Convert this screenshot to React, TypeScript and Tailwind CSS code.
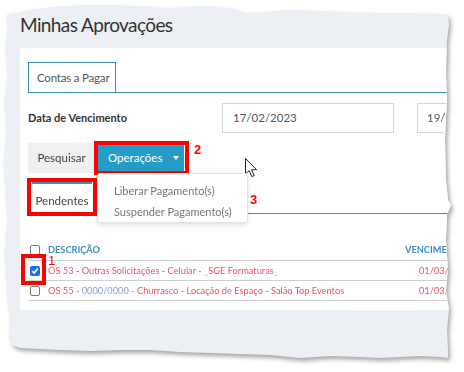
const paperClip =
  "[clip-path:polygon(3px_10px,16px_8px,31px_5px,51px_3px,76px_1px,106px_1px,136px_2px,166px_4px,196px_2px,226px_4px,241px_9px,256px_8px,286px_6px,316px_7px,346px_8px,376px_9px,406px_9px,436px_10px,444px_11px,445px_21px,443px_36px,442px_66px,443px_96px,441px_136px,442px_176px,444px_196px,447px_201px,443px_211px,442px_236px,444px_266px,442px_286px,445px_306px,443px_326px,444px_346px,444px_354px,436px_353px,416px_352px,396px_353px,376px_354px,356px_353px,326px_352px,296px_354px,266px_351px,236px_350px,206px_349px,176px_348px,146px_346px,116px_346px,86px_347px,56px_346px,36px_345px,16px_344px,8px_341px,5px_326px,7px_311px,4px_296px,3px_276px,1px_246px,4px_216px,2px_186px,0px_156px,3px_126px,1px_96px,4px_66px,2px_41px,4px_21px)]";

function Box({ checked }: { checked?: boolean }) {
  if (checked) {
    return (
      <div className="flex h-[10px] w-[10px] items-center justify-center rounded-[2px] bg-[#1a6fe8]">
        <svg width="8" height="8" viewBox="0 0 8 8">
          <path d="M1.2 4.2 L3.2 6 L6.8 1.6" fill="none" stroke="white" strokeWidth="1.6" />
        </svg>
      </div>
    );
  }
  return <div className="h-[10px] w-[10px] rounded-[2px] border border-[#7a7a7a] bg-white" />;
}

export default function App() {
  return (
    <div className="h-[372px] w-[464px] overflow-hidden bg-white font-['Lato',sans-serif]">
      <div className="pl-[4px] pt-[4px] [filter:drop-shadow(2px_3px_2px_rgba(0,0,0,0.35))]">
        <div className={`h-[362px] w-[452px] bg-[#ecf0f5] pt-[9px] ${paperClip}`}>
          <h1 className="pl-[16px] text-[19px] leading-[24px] tracking-[-0.6px] text-[#333]">Minhas Aprovações</h1>

          <div className="relative ml-[16px] mt-[11px] h-[262px] w-[440px] bg-white pt-[14px]">
            <div className="ml-[8px] flex border-b border-[#3c8dbc]">
              <div className="h-[30px] w-[88px] shrink-0 whitespace-nowrap border border-b-0 border-[#3c8dbc] pl-[8px] text-[11.5px] leading-[29px] tracking-[-0.2px] text-[#555]">
                Contas a Pagar
              </div>
            </div>

            <div className="ml-[8px] mt-[10px] flex items-center">
              <div className="w-[194px] shrink-0 whitespace-nowrap text-[11px] font-bold text-[#333]">Data de Vencimento</div>
              <div className="h-[30px] w-[172px] shrink-0 border border-[#d2d6de] pl-[10px] text-[11.5px] leading-[28px] text-[#555]">
                17/02/2023
              </div>
              <div className="ml-[23px] h-[30px] w-[60px] shrink-0 overflow-hidden whitespace-nowrap border border-[#d2d6de] pl-[9px] text-[11.5px] leading-[28px] text-[#555]">
                19/02/2023
              </div>
            </div>

            <div className="ml-[8px] mt-[10px] flex">
              <div className="flex h-[30px] w-[67px] shrink-0 items-center justify-center bg-[#f0f0f0] text-[11.5px] text-[#444]">
                Pesquisar
              </div>
              <div className="relative ml-[2px] flex h-[30px] w-[87px] shrink-0 items-center bg-[#259cc5] pl-[11px] text-[11.5px] text-white">
                Operações
                <span className="ml-[11px] h-0 w-0 border-x-[3.5px] border-t-[4px] border-x-transparent border-t-white" />
                <div className="absolute -left-[3px] -top-[2px] h-[34px] w-[95px] border-[4px] border-[#ff0000]" />
                <div className="absolute left-[97px] -top-[3px] font-['Liberation_Sans',sans-serif] text-[13px] font-bold text-[#ff0000]">
                  2
                </div>
                <div className="absolute left-0 top-[30px] z-10 h-[50px] w-[151px] rounded-[3px] border border-[#e2e2e2] bg-white pt-[6px] text-[11px] leading-[21px] text-[#777] shadow-[0_2px_4px_rgba(0,0,0,0.12)]">
                  <div className="whitespace-nowrap pl-[16px]">Liberar Pagamento(s)</div>
                  <div className="whitespace-nowrap pl-[16px]">Suspender Pagamento(s)</div>
                </div>
              </div>
            </div>

            <div className="ml-[8px] mt-[9px] flex border-b border-[#3c8dbc]">
              <div className="relative ml-[4px] h-[31px] w-[60px] shrink-0 border-t-2 border-[#3c8dbc] pt-[8px] text-center text-[11.5px] text-[#444]">
                Pendentes
                <div className="absolute -left-[5px] -top-[6px] h-[38px] w-[70px] border-[4px] border-[#ff0000]" />
              </div>
            </div>

            <div className="ml-[8px] mt-[25px] text-[9.25px]">
              <div className="flex h-[22px] items-center border-b border-[#cfcfcf] font-bold text-[#3c8dbc]">
                <div className="w-[20px] shrink-0 pl-[2px]">
                  <Box />
                </div>
                <div className="w-[357px] shrink-0">DESCRIÇÃO</div>
                <div className="whitespace-nowrap">VENCIMENTO</div>
              </div>
              <div className="flex h-[20px] items-center border-b border-[#cfcfcf] text-[#f0505f]">
                <div className="relative w-[20px] shrink-0 pl-[2px]">
                  <Box checked />
                  <div className="absolute -left-[7px] -top-[12px] h-[31px] w-[25px] border-[4px] border-[#ff0000]" />
                  <div className="absolute left-[20px] -top-[15px] font-['Liberation_Sans',sans-serif] text-[13px] text-[#ff0000]">
                    1
                  </div>
                </div>
                <div className="w-[357px] shrink-0 whitespace-nowrap">
                  OS 53 - Outras Solicitações - Celular - <span className="text-[#f7a0aa]">_</span>SGE Formaturas
                  <span className="text-[#f7a0aa]">_</span>
                </div>
                <div className="whitespace-nowrap pl-[14px]">01/03/2023</div>
              </div>
              <div className="flex h-[20px] items-center border-b border-[#cfcfcf] text-[#f0505f]">
                <div className="w-[20px] shrink-0 pl-[2px]">
                  <Box />
                </div>
                <div className="w-[357px] shrink-0 whitespace-nowrap">
                  OS 55 - <span className="text-[#8c9ddb]">0000/0000</span> - Churrasco - Locação de Espaço - Salão Top
                  Eventos
                </div>
                <div className="whitespace-nowrap pl-[14px]">01/03/2023</div>
              </div>
            </div>

            <div className="absolute left-[230px] top-[142px] font-['Liberation_Sans',sans-serif] text-[13px] font-bold text-[#ff0000]">
              3
            </div>
            <svg className="absolute left-[225px] top-[110px]" width="13" height="20" viewBox="0 0 13 20">
              <path
                d="M0.5 0.5 L0.5 16 L4.2 12.6 L6.8 18.6 L9.2 17.6 L6.6 11.7 L11.6 11.7 Z"
                fill="white"
                stroke="#222"
                strokeWidth="1"
                strokeLinejoin="round"
              />
            </svg>
          </div>
        </div>
      </div>
    </div>
  );
}
